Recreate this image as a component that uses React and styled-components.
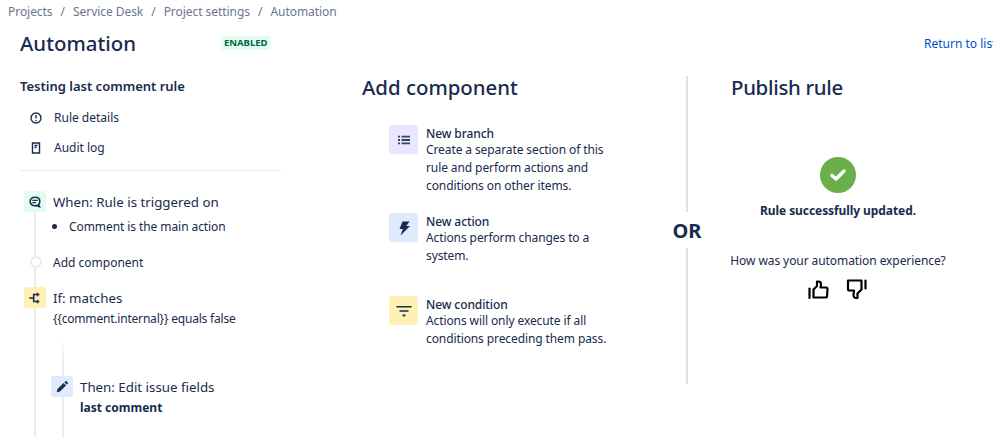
import React from 'react'
import styled, { createGlobalStyle } from 'styled-components'

const Global = createGlobalStyle`
  html, body {
    margin: 0;
    background: #fff;
    overflow: hidden;
  }
  body {
    color: #172b4d;
    font-family: "Noto Sans", "Open Sans", sans-serif;
    font-size: 12px;
  }
`

const Page = styled.div`
  width: 993px;
  height: 437px;
  overflow: hidden;
`

const Crumbs = styled.nav`
  display: flex;
  gap: 8px;
  padding: 3px 0 0 8px;
  height: 17px;
  line-height: 17px;
  color: #6b778c;
  letter-spacing: -0.05px;
`

const Header = styled.header`
  display: flex;
  align-items: center;
  height: 38px;
  margin-top: 4px;
  padding-left: 20px;
  white-space: nowrap;
`

const Title = styled.h1`
  width: 201px;
  margin: 0;
  font-size: 20.4px;
  font-weight: 500;
  line-height: 38px;
`

const Lozenge = styled.span`
  padding: 0 3px;
  border-radius: 3px;
  background: #e3fcef;
  color: #006644;
  font-size: 9.5px;
  font-weight: 700;
  line-height: 14px;
`

const ReturnLink = styled.a`
  margin-left: auto;
  width: 69px;
  overflow: hidden;
  color: #0052cc;
  font-size: 12px;
`

const Columns = styled.main`
  display: flex;
  padding: 14px 0 0 20px;
`

const RulePanel = styled.section`
  flex: none;
  width: 261px;
  margin-right: 81px;
`

const RuleName = styled.h2`
  margin: 1px 0 0;
  font-size: 13px;
  font-weight: 600;
  line-height: 18px;
`

const NavList = styled.div`
  display: flex;
  flex-direction: column;
  gap: 14px;
  padding: 15px 0 14px 10px;
  border-bottom: 1px solid #ebecf0;
`

const NavItem = styled.div`
  display: flex;
  align-items: center;
  gap: 12px;
  height: 16px;
  line-height: 16px;

  svg {
    flex: none;
    width: 12px;
    height: 12px;
  }
`

const Timeline = styled.div`
  position: relative;
  padding: 20px 0 0 4px;

  &::before {
    content: '';
    position: absolute;
    left: 14px;
    top: 40px;
    height: 240px;
    width: 2px;
    background: #ebecf0;
  }
`

const Step = styled.div`
  position: relative;
  display: flex;
  align-items: center;
  gap: 7px;
  height: 21px;
  font-size: 13.3px;
`

const StepTile = styled.span`
  flex: none;
  display: flex;
  align-items: center;
  justify-content: center;
  width: 22px;
  height: 21px;
  border-radius: 3px;
  background: ${({ $bg }) => $bg};

  svg {
    width: 14px;
    height: 14px;
  }
`

const Detail = styled.div`
  padding: ${({ $top }) => $top}px 0 0 29px;
  line-height: 16px;
  letter-spacing: ${({ $tight }) => ($tight ? '-0.2px' : '0')};
`

const Bullet = styled.ul`
  height: 20px;
  margin: 0;
  padding: 0 0 0 16px;
  line-height: 18px;
  letter-spacing: -0.08px;

  li::marker {
    font-size: 15px;
  }
`

const AddStep = styled.div`
  position: relative;
  display: flex;
  align-items: center;
  gap: 11px;
  height: 16px;
  margin: 18px 0 17px 6px;
`

const Dot = styled.span`
  flex: none;
  width: 8px;
  height: 8px;
  border: 2px solid #ebecf0;
  border-radius: 50%;
  background: #fff;
`

const Nested = styled.div`
  position: relative;
  margin: 12px 0 0 38px;
  padding-top: 37px;
  height: 120px;

  &::before {
    content: '';
    position: absolute;
    left: 0;
    top: 0;
    bottom: 0;
    width: 2px;
    background: linear-gradient(#fff, #ebecf0 20px);
  }

  & > * {
    margin-left: -11px;
  }
`

const Bold = styled.div`
  font-weight: 700;
`

const ComponentPanel = styled.section`
  flex: none;
  width: 281px;
`

const PanelTitle = styled.h2`
  margin: -2px 0 2px;
  font-size: 20.4px;
  font-weight: 500;
  line-height: 26px;
  letter-spacing: ${({ $tight }) => ($tight ? '-0.3px' : '0')};
`

const ComponentList = styled.div`
  padding: 23px 0 0 27px;
`

const ComponentItem = styled.div`
  display: flex;
  gap: 8px;
  height: ${({ $h }) => $h}px;
  line-height: 18px;
  letter-spacing: -0.1px;

  h3 {
    margin: 1px 0 0;
    font-size: 12px;
    font-weight: 500;
    line-height: 16px;
  }

  p {
    margin: -1px 0 0;
    width: 200px;
  }
`

const Tile = styled.span`
  flex: none;
  display: flex;
  align-items: center;
  justify-content: center;
  width: 29px;
  height: 29px;
  border-radius: 3px;
  background: ${({ $bg }) => $bg};

  svg {
    width: 18px;
    height: 18px;
  }
`

const Separator = styled.div`
  flex: none;
  display: flex;
  flex-direction: column;
  align-items: center;
  width: 88px;
  height: 308px;
`

const Rule = styled.span`
  flex: 1;
  width: 2px;
  background: #dfe1e6;
`

const Or = styled.strong`
  padding: 6px 0 4px;
  font-size: 20px;
  font-weight: 700;
  line-height: 26px;
`

const PublishPanel = styled.section`
  flex: none;
  width: 214px;
`

const Result = styled.div`
  display: flex;
  flex-direction: column;
  align-items: center;
  padding-top: 55px;
  letter-spacing: -0.08px;
`

const Success = styled.strong`
  margin-top: 9px;
  font-weight: 700;
  line-height: 18px;
`

const Question = styled.div`
  margin-top: 32px;
  line-height: 18px;
  white-space: nowrap;
`

const Votes = styled.div`
  display: flex;
  gap: 17px;
  margin: 9px 2px 0 0;

  svg {
    width: 22px;
    height: 21px;
    fill: none;
    stroke: #000;
    stroke-width: 2.2;
    stroke-linejoin: round;
    stroke-linecap: round;
  }
`

const CommentIcon = () => (
  <svg viewBox="0 0 16 16" fill="none" stroke="#172b4d" strokeWidth="1.8">
    <path d="M8 2.500c3.200 0 5.500 1.900 5.500 4.800 0 1.500-.6 2.700-1.600 3.500l1.100 2.400-3.300-1.200c-.5.100-1.100.2-1.700.2-3.100 0-5.500-1.800-5.500-4.700S4.900 2.500 8 2.500z" />
    <path d="M5 6.200h6M5 8.700h4" strokeWidth="1.400" />
  </svg>
)

const BranchIcon = () => (
  <svg viewBox="0 0 16 16" fill="none" stroke="#172b4d" strokeWidth="1.800">
    <path d="M1.500 8h5M6.500 8V4h5M6.500 8v4h5" />
    <path d="M10.500 2l2.500 2-2.500 2zM10.500 10l2.500 2-2.500 2z" fill="#172b4d" strokeWidth="0.600" />
  </svg>
)

const PencilIcon = () => (
  <svg viewBox="0 0 16 16" fill="#172b4d">
    <path d="M2 14l.8-3.600 7-7 2.800 2.800-7 7zM10.700 2.500l1-1a1 1 0 0 1 1.400 0l1.400 1.400a1 1 0 0 1 0 1.400l-1 1z" />
  </svg>
)

const ListIcon = () => (
  <svg viewBox="0 0 18 18" fill="#344563">
    <path d="M3 4.800h2v1.800H3zM3 8.100h2v1.800H3zM3 11.400h2v1.800H3zM6.500 4.800H15v1.800H6.500zM6.500 8.100H15v1.800H6.500zM6.500 11.400H15v1.800H6.500z" />
  </svg>
)

const BoltIcon = () => (
  <svg viewBox="0 0 18 18" fill="#172b4d">
    <path d="M7.500 2.500h7L11.300 7H15L5.500 16.500l2.300-6.500H4.500z" />
  </svg>
)

const FilterIcon = () => (
  <svg viewBox="0 0 18 18" fill="#172b4d">
    <path d="M1.500 4h15v1.500h-15zM4.500 8.300h9v1.500h-9zM7.500 12.600h3v1.200l-1.500 1-1.500-1z" />
  </svg>
)

const CheckBadge = () => (
  <svg width="36" height="36" viewBox="0 0 36 36">
    <circle cx="18" cy="18" r="18" fill="#6aaf4b" />
    <path d="M12 18.500l4 3.500 8-8" fill="none" stroke="#fff" strokeWidth="3.500" strokeLinecap="round" strokeLinejoin="round" />
  </svg>
)

const ThumbUp = () => (
  <svg viewBox="0 0 22 21">
    <path d="M2.500 9.500V19" />
    <path d="M6.500 18.500v-8L10 7V2.500h1.500c1.500 0 2.500 1.500 2.500 3 0 1-.3 2-.5 3H19c1 0 1.500.7 1.500 1.500L20 17.500c-.1.700-.6 1-1.500 1z" />
  </svg>
)

const ThumbDown = () => (
  <svg viewBox="0 0 22 21">
    <path d="M19.500 1.500v8" />
    <path d="M2 1.500h13.500v9l-4 4V19H10c-1.500 0-2.500-1.500-2.500-3 0-1 .3-2 .5-4.500H3.500C2.500 11.500 2 11 2 10z" />
  </svg>
)

const App = () => (
  <Page>
    <Global />
    <Crumbs>
      <span>Projects</span>
      <span>/</span>
      <span>Service Desk</span>
      <span>/</span>
      <span>Project settings</span>
      <span>/</span>
      <span>Automation</span>
    </Crumbs>
    <Header>
      <Title>Automation</Title>
      <Lozenge>ENABLED</Lozenge>
      <ReturnLink>Return to list</ReturnLink>
    </Header>
    <Columns>
      <RulePanel>
        <RuleName>Testing last comment rule</RuleName>
        <NavList>
          <NavItem>
            <svg viewBox="0 0 12 12" fill="none" stroke="#172b4d" strokeWidth="1.400">
              <circle cx="6" cy="6" r="5" />
              <path d="M6 3v3.500M6 8v1.200" />
            </svg>
            Rule details
          </NavItem>
          <NavItem>
            <svg viewBox="0 0 12 12" fill="none" stroke="#172b4d" strokeWidth="1.400">
              <path d="M2.500 1h7v10h-7zM4.500 3.500h3M4.500 5.500h2" />
            </svg>
            Audit log
          </NavItem>
        </NavList>
        <Timeline>
          <Step>
            <StepTile $bg="#e3fcef"><CommentIcon /></StepTile>
            When: Rule is triggered on
          </Step>
          <Detail $top={4}>
            <Bullet><li>Comment is the main action</li></Bullet>
          </Detail>
          <AddStep>
            <Dot />
            Add component
          </AddStep>
          <Step>
            <StepTile $bg="#fff0b3"><BranchIcon /></StepTile>
            If: matches
          </Step>
          <Detail $top={3} $tight>{'{{comment.internal}} equals false'}</Detail>
          <Nested>
            <Step>
              <StepTile $bg="#deebff"><PencilIcon /></StepTile>
              Then: Edit issue fields
            </Step>
            <Detail $top={3}>
              <Bold>last comment</Bold>
            </Detail>
          </Nested>
        </Timeline>
      </RulePanel>
      <ComponentPanel>
        <PanelTitle>Add component</PanelTitle>
        <ComponentList>
          <ComponentItem $h={88}>
            <Tile $bg="#eae6ff"><ListIcon /></Tile>
            <div>
              <h3>New branch</h3>
              <p>Create a separate section of this rule and perform actions and conditions on other items.</p>
            </div>
          </ComponentItem>
          <ComponentItem $h={83}>
            <Tile $bg="#deebff"><BoltIcon /></Tile>
            <div>
              <h3>New action</h3>
              <p>Actions perform changes to a system.</p>
            </div>
          </ComponentItem>
          <ComponentItem $h={60}>
            <Tile $bg="#fff0b3"><FilterIcon /></Tile>
            <div>
              <h3>New condition</h3>
              <p>Actions will only execute if all conditions preceding them pass.</p>
            </div>
          </ComponentItem>
        </ComponentList>
      </ComponentPanel>
      <Separator>
        <Rule />
        <Or>OR</Or>
        <Rule />
      </Separator>
      <PublishPanel>
        <PanelTitle $tight>Publish rule</PanelTitle>
        <Result>
          <CheckBadge />
          <Success>Rule successfully updated.</Success>
          <Question>How was your automation experience?</Question>
          <Votes>
            <ThumbUp />
            <ThumbDown />
          </Votes>
        </Result>
      </PublishPanel>
    </Columns>
  </Page>
)

export default App
